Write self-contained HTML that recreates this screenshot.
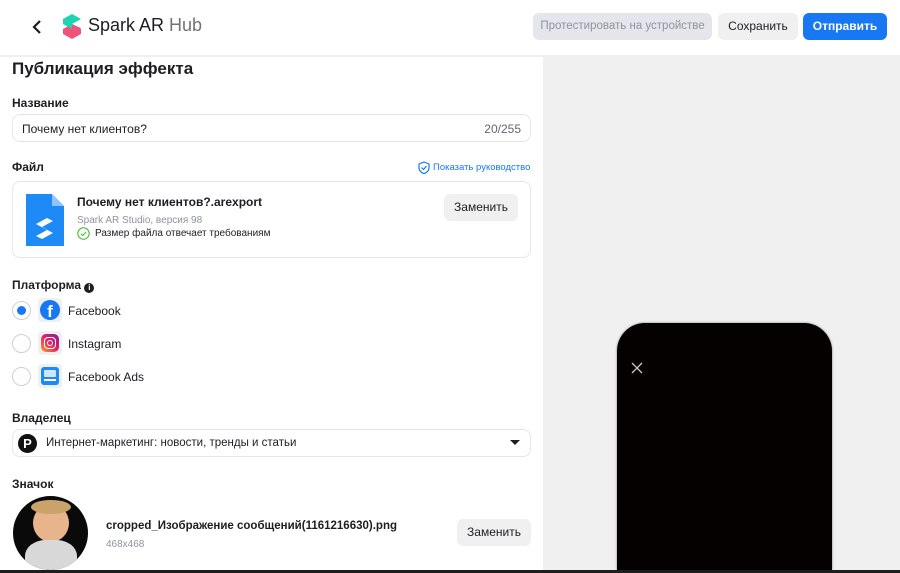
<!DOCTYPE html>
<html><head><meta charset="utf-8"><style>
*{box-sizing:border-box;margin:0;padding:0}
html,body{width:900px;height:573px;overflow:hidden}
body{background:#fff;font-family:"Liberation Sans","Noto Sans CJK SC",sans-serif;color:#1c1e21;position:relative}
.a{position:absolute;white-space:nowrap}
.btn{position:absolute;border-radius:6px;font-size:12px;text-align:center;line-height:27px;height:27px;white-space:nowrap;overflow:hidden}
.lbl{position:absolute;left:12px;font-size:12px;font-weight:bold}
.box{position:absolute;border:1px solid #e4e6eb;border-radius:8px;background:#fff}
.radio{position:absolute;left:12px;width:19px;height:19px;border:1px solid #ccd0d5;border-radius:50%;background:#fff}
.tile{position:absolute;left:38px;width:24px;height:24px;border-radius:4px;background:#f0f0f0}
.pl{position:absolute;left:68px;font-size:12px;color:#1c1e21}
</style></head><body>
<svg class="a" style="left:31px;top:19px" width="12" height="16"><path d="M9 2 L3 8 L9 14" stroke="#1c1e21" stroke-width="2.2" fill="none"/></svg>
<svg class="a" style="left:62px;top:14px" width="20" height="25">
<path d="M1 5 L10 0 L19 5 L10 10 Z" fill="#1bd5b0"/>
<path d="M1 5 L10 10 L19 14 L10 19 Z" fill="#3b8bf5" opacity="0.9"/>
<path d="M1 15 L10 10 L19 15 L19 20 L10 25 L1 20 Z" fill="#f0527a"/>
<path d="M1 5 L1 10 L10 15 L10 10 Z" fill="#1bd5b0"/>
</svg>
<div class="a" style="left:88px;top:15px;font-size:18px;color:#1c1e21">Spark AR <span style="color:#737373">Hub</span></div>
<div class="btn" style="left:533px;top:13px;width:179px;background:#e4e6eb;color:#8d949e;font-size:11.5px">Протестировать на устройстве</div>
<div class="btn" style="left:718px;top:13px;width:80px;background:#f0f0f0;color:#1c1e21">Сохранить</div>
<div class="btn" style="left:803px;top:13px;width:84px;background:#1877f2;color:#fff;font-weight:bold">Отправить</div>
<div class="a" style="left:0;top:55px;width:900px;height:2px;background:#efefef"></div>
<div class="a" style="left:543px;top:57px;width:357px;height:513px;background:#f0f0f0"></div>
<div class="a" style="left:617px;top:323px;width:215px;height:247px;background:#050101;border-radius:28px 28px 0 0;box-shadow:0 0 2px #777"></div>
<svg class="a" style="left:631px;top:362px" width="12" height="12"><path d="M1 1 L11 11 M11 1 L1 11" stroke="#ccc" stroke-width="1.3"/></svg>
<div class="a" style="left:12px;top:59px;font-size:17px;font-weight:bold">Публикация эффекта</div>
<div class="lbl" style="top:96px">Название</div>
<div class="box" style="left:12px;top:114px;width:519px;height:28px"><span class="a" style="left:9px;top:7px;font-size:12px">Почему нет клиентов?</span><span class="a" style="right:9px;top:7px;font-size:12px;color:#606770">20/255</span></div>
<div class="lbl" style="top:160px">Файл</div>
<svg class="a" style="left:418px;top:161px" width="12" height="13"><path d="M6 1 L11 3 L11 7 C11 10 8 12 6 12.5 C4 12 1 10 1 7 L1 3 Z" stroke="#1877f2" fill="none" stroke-width="1.2"/><path d="M3.5 6.5 L5.5 8.5 L8.5 5" stroke="#1877f2" fill="none" stroke-width="1.2"/></svg>
<div class="a" style="left:433px;top:162px;font-size:9.5px;color:#1877f2">Показать руководство</div>
<div class="box" style="left:12px;top:181px;width:519px;height:77px"></div>
<svg class="a" style="left:26px;top:194px" width="38" height="52"><path d="M0 0 H26 L38 12 V52 H0 Z" fill="#1d8af5"/><path d="M26 0 L38 12 H26 Z" fill="#8fc3fb"/><path d="M10 30 L21 24 L27 27 L16 33 L27 39 L16 45 L10 42 L21 36 Z" fill="#fff"/></svg>
<div class="a" style="left:77px;top:195px;font-size:12px;font-weight:bold">Почему нет клиентов?.arexport</div>
<div class="a" style="left:77px;top:215px;font-size:10px;color:#8d949e">Spark AR Studio, версия 98</div>
<svg class="a" style="left:77px;top:227px" width="13" height="13"><circle cx="6.5" cy="6.5" r="5.7" stroke="#42b72a" fill="none" stroke-width="1"/><path d="M3.8 6.7 L5.8 8.6 L9.3 4.8" stroke="#42b72a" fill="none" stroke-width="1"/></svg>
<div class="a" style="left:95px;top:228px;font-size:10px;color:#1c1e21">Размер файла отвечает требованиям</div>
<div class="btn" style="left:444px;top:194px;width:74px;background:#f0f0f0">Заменить</div>
<div class="lbl" style="top:278px">Платформа <span style="display:inline-block;width:10px;height:10px;border-radius:50%;background:#1c1e21;color:#fff;font-size:8px;line-height:10px;text-align:center;vertical-align:-1px">i</span></div>
<div class="radio" style="top:301px"><div class="a" style="left:4px;top:4px;width:9px;height:9px;border-radius:50%;background:#1877f2"></div></div>
<div class="radio" style="top:334px"></div>
<div class="radio" style="top:367px"></div>
<div class="tile" style="top:298px"><div class="a" style="left:2px;top:2px;width:20px;height:20px;border-radius:50%;background:#1877f2;color:#fff;font-weight:bold;font-size:17px;text-align:center;line-height:24px;overflow:hidden">f</div></div>
<div class="tile" style="top:331px"><div class="a" style="left:3px;top:3px;width:18px;height:18px;border-radius:5px;background:linear-gradient(45deg,#f9a825,#e91e63 50%,#7b1fa2)"><div class="a" style="left:3px;top:3px;width:12px;height:12px;border:1.5px solid #fff;border-radius:4px"></div><div class="a" style="left:6px;top:6px;width:6px;height:6px;border:1.5px solid #fff;border-radius:50%"></div></div></div>
<div class="tile" style="top:364px"><div class="a" style="left:3px;top:3px;width:18px;height:18px;border-radius:3px;background:#1d8af5"><div class="a" style="left:3px;top:3px;width:12px;height:7px;background:#cfe5fd;border-radius:1px"></div><div class="a" style="left:3px;top:12px;width:12px;height:2px;background:#fff"></div></div></div>
<div class="pl" style="top:304px">Facebook</div>
<div class="pl" style="top:337px">Instagram</div>
<div class="pl" style="top:370px">Facebook Ads</div>
<div class="lbl" style="top:411px">Владелец</div>
<div class="box" style="left:12px;top:429px;width:519px;height:28px">
<div class="a" style="left:5px;top:4px;width:19px;height:19px;border-radius:50%;background:#111;color:#fff;font-weight:bold;font-size:13px;text-align:center;line-height:19px">P</div>
<span class="a" style="left:33px;top:7px;font-size:11.5px">Интернет-маркетинг: новости, тренды и статьи</span>
<svg class="a" style="left:497px;top:10px" width="10" height="6"><path d="M0 0 H10 L5 5 Z" fill="#1c1e21"/></svg></div>
<div class="lbl" style="top:477px">Значок</div>
<div class="a" style="left:13px;top:496px;width:75px;height:74px;border-radius:50%;background:#0a0a0a;overflow:hidden">
<div class="a" style="left:20px;top:8px;width:36px;height:38px;border-radius:50%;background:#e7b48c"></div>
<div class="a" style="left:18px;top:4px;width:40px;height:14px;border-radius:50%;background:#c9a36a"></div>
<div class="a" style="left:12px;top:44px;width:52px;height:40px;border-radius:40% 40% 0 0;background:#d8d8d8"></div>
</div>
<div class="a" style="left:106px;top:520px;font-size:11.5px;font-weight:bold">cropped_Изображение сообщений(1161216630).png</div>
<div class="a" style="left:106px;top:539px;font-size:10px;color:#8d949e">468x468</div>
<div class="btn" style="left:457px;top:519px;width:74px;background:#f0f0f0">Заменить</div>
<div class="a" style="left:0;top:570px;width:900px;height:3px;background:#1e1e1e"></div>
</body></html>
